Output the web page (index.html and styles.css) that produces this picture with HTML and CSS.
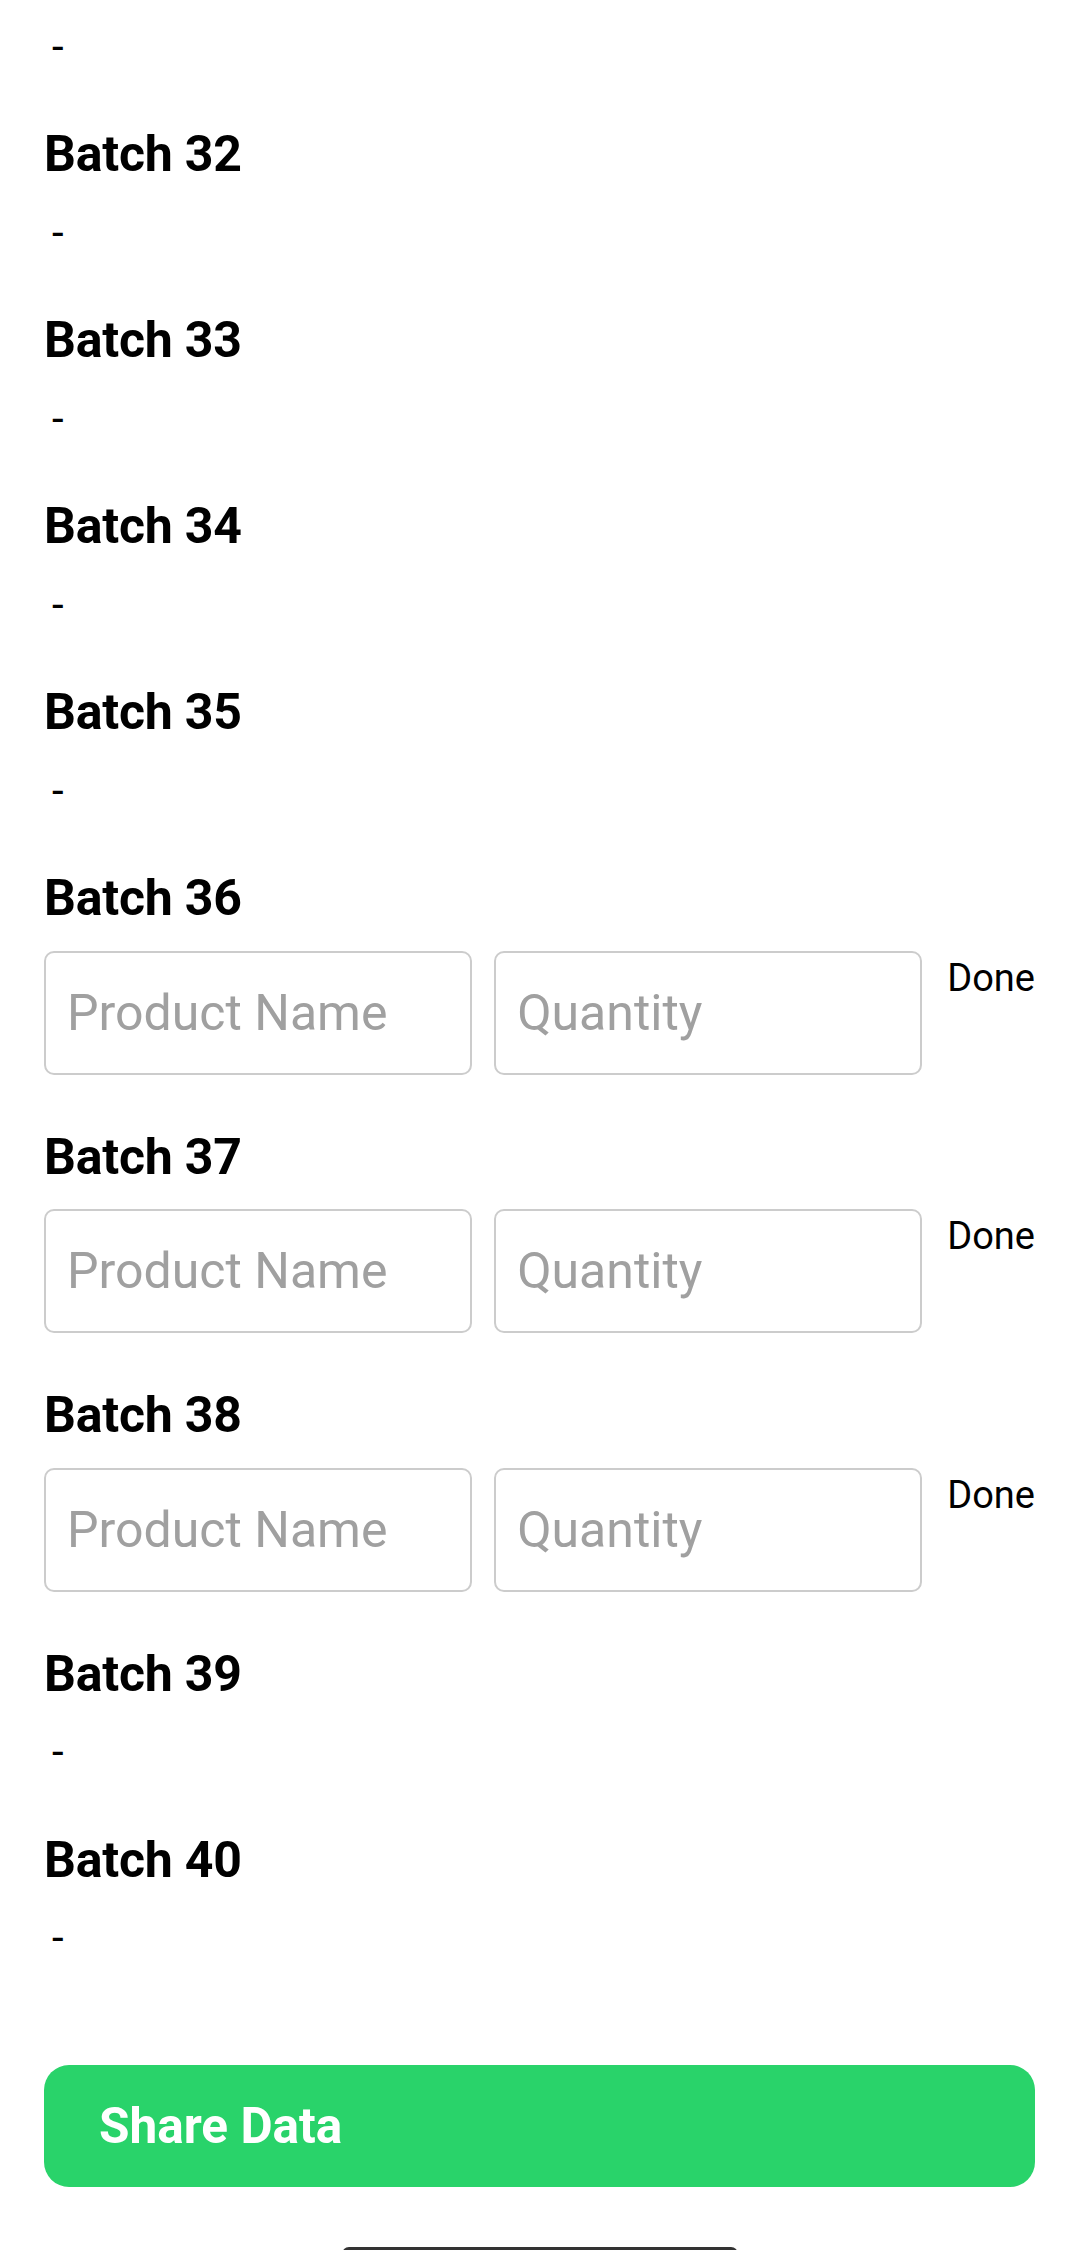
FILE: index.html
```html
<!DOCTYPE html>
<html lang="en">
<head>
<meta charset="utf-8">
<title>Batches</title>
<link rel="stylesheet" href="styles.css">
</head>
<body>
<div class="screen">
  <div class="list">
    <section class="batch"><h2 class="batch-title">Batch 31</h2><p class="batch-empty">-</p></section>
    <section class="batch"><h2 class="batch-title">Batch 32</h2><p class="batch-empty">-</p></section>
    <section class="batch"><h2 class="batch-title">Batch 33</h2><p class="batch-empty">-</p></section>
    <section class="batch"><h2 class="batch-title">Batch 34</h2><p class="batch-empty">-</p></section>
    <section class="batch"><h2 class="batch-title">Batch 35</h2><p class="batch-empty">-</p></section>
    <section class="batch">
      <h2 class="batch-title">Batch 36</h2>
      <div class="entry-row">
        <input class="field field-name" type="text" placeholder="Product Name">
        <input class="field field-qty" type="text" placeholder="Quantity">
        <span class="done">Done</span>
      </div>
    </section>
    <section class="batch">
      <h2 class="batch-title">Batch 37</h2>
      <div class="entry-row">
        <input class="field field-name" type="text" placeholder="Product Name">
        <input class="field field-qty" type="text" placeholder="Quantity">
        <span class="done">Done</span>
      </div>
    </section>
    <section class="batch">
      <h2 class="batch-title">Batch 38</h2>
      <div class="entry-row">
        <input class="field field-name" type="text" placeholder="Product Name">
        <input class="field field-qty" type="text" placeholder="Quantity">
        <span class="done">Done</span>
      </div>
    </section>
    <section class="batch"><h2 class="batch-title">Batch 39</h2><p class="batch-empty">-</p></section>
    <section class="batch"><h2 class="batch-title">Batch 40</h2><p class="batch-empty">-</p></section>
  </div>
  <button class="share" type="button">Share Data</button>
  <div class="home-bar"><div class="home-indicator"></div></div>
</div>
</body>
</html>
```

FILE: styles.css
```css
* {
  box-sizing: border-box;
}

html, body {
  margin: 0;
  padding: 0;
  background: #ffffff;
}

body {
  font-family: Roboto, "Noto Sans", "Liberation Sans", sans-serif;
  color: #000000;
  overflow: hidden;
}

.screen {
  width: 1080px;
  padding: 0 45px 0 44px;
}

.list {
  margin-top: -62px;
  display: flex;
  flex-direction: column;
}

.batch {
  margin-bottom: 52px;
}

.batch-title {
  margin: 0 0 21px 0;
  font-size: 50px;
  line-height: 61.5px;
  font-weight: 700;
  letter-spacing: -0.2px;
  color: #000;
}

.batch-empty {
  margin: 0;
  padding-left: 8px;
  font-size: 42px;
  line-height: 51.5px;
  height: 51.5px;
  color: #000;
}

.entry-row {
  display: flex;
  align-items: flex-start;
}

.field {
  flex: 1 1 0;
  min-width: 0;
  height: 124px;
  margin: 0;
  padding: 0 0 0 21px;
  border: 2.6px solid #cccccc;
  border-radius: 10px;
  background: #ffffff;
  font-family: Roboto, "Noto Sans", "Liberation Sans", sans-serif;
  font-size: 50px;
  color: #000;
  outline: none;
}

.field::placeholder {
  color: #a0a0a0;
  opacity: 1;
}

.field-name {
  margin-right: 22px;
}

.field-qty {
  margin-right: 25px;
}

.done {
  flex: 0 0 auto;
  margin-top: 5px;
  font-size: 38px;
  line-height: 45px;
  color: #000;
}

.share {
  display: flex;
  align-items: center;
  width: 100%;
  height: 122px;
  margin: 49px 0 0 0;
  padding: 0 0 0 55px;
  border: none;
  border-radius: 25px;
  background: #29d36a;
  color: #ffffff;
  font-family: Roboto, "Noto Sans", "Liberation Sans", sans-serif;
  font-size: 49.5px;
  font-weight: 700;
  text-align: left;
}

.home-bar {
  display: flex;
  justify-content: center;
  padding-top: 60px;
  margin-left: -44px;
  margin-right: -45px;
}

.home-indicator {
  width: 396px;
  height: 14px;
  border-radius: 7px;
  background: #333333;
}
```
